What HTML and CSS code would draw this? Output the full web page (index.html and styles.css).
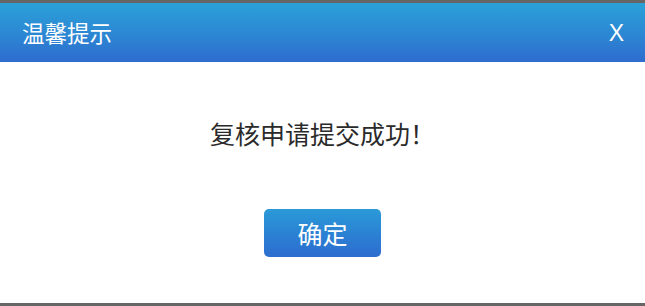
FILE: index.html
```html
<!DOCTYPE html>
<html lang="zh-CN">
<head>
<meta charset="utf-8">
<title>温馨提示</title>
<link rel="stylesheet" href="styles.css">
</head>
<body>
<div class="dialog">
  <div class="dialog-header">
    <span class="dialog-title">温馨提示</span>
    <span class="dialog-close">X</span>
  </div>
  <div class="dialog-body">
    <div class="dialog-message">复核申请提交成功！</div>
    <button class="dialog-btn" type="button">确定</button>
  </div>
</div>
</body>
</html>
```

FILE: styles.css
```css
html, body {
  margin: 0;
  padding: 0;
}
body {
  background: #666666;
  width: 645px;
  height: 306px;
  overflow: hidden;
  font-family: "Noto Sans CJK SC", "Liberation Sans", sans-serif;
}
.dialog {
  margin-top: 3px;
  height: 300px;
  background: #ffffff;
  display: flex;
  flex-direction: column;
}
.dialog-header {
  height: 59px;
  flex: none;
  display: flex;
  align-items: center;
  justify-content: space-between;
  padding: 0 21px 0 22px;
  background: linear-gradient(to bottom, #2ba1d8 0%, #2c86d3 55%, #2e6ccf 100%);
  color: #ffffff;
}
.dialog-title {
  font-size: 22.5px;
  line-height: 24px;
  margin-top: -2px;
}
.dialog-close {
  font-family: "Liberation Sans", sans-serif;
  font-size: 23px;
  line-height: 24px;
  margin-top: 1px;
}
.dialog-body {
  flex: 1;
  display: flex;
  flex-direction: column;
  align-items: center;
  padding-top: 51px;
}
.dialog-message {
  font-size: 25px;
  line-height: 40px;
  color: #2a2a2a;
}
.dialog-btn {
  margin-top: 56px;
  width: 117px;
  height: 48px;
  border: none;
  border-radius: 5px;
  padding: 0;
  background: linear-gradient(to bottom, #2a9ad8 0%, #2b80d3 55%, #2d6dcf 100%);
  color: #ffffff;
  font-family: "Noto Sans CJK SC", sans-serif;
  font-size: 25px;
  line-height: 48px;
}
```
